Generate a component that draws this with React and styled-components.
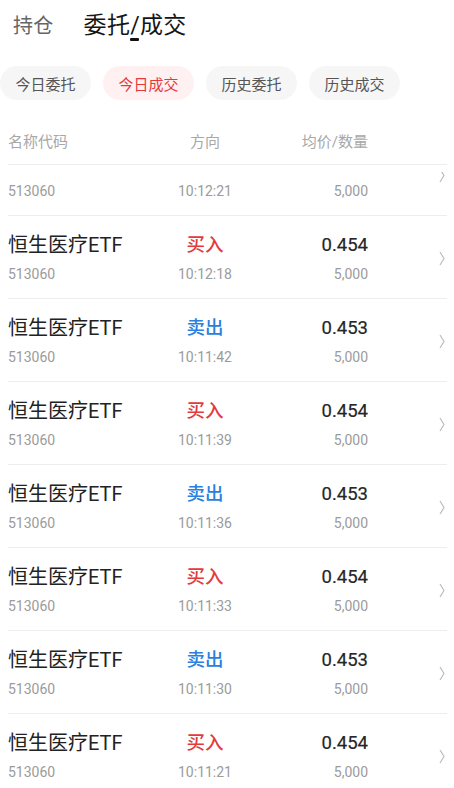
import React, { useLayoutEffect, useRef, useState } from "react";
import styled, { createGlobalStyle } from "styled-components";

const GlobalStyle = createGlobalStyle`
  html, body {
    margin: 0;
    padding: 0;
    background: #fff;
  }
  body {
    font-family: Roboto, "Noto Sans CJK SC", sans-serif;
    -webkit-font-smoothing: antialiased;
  }
  * { box-sizing: border-box; }
`;

const Page = styled.div`
  display: flex;
  flex-direction: column;
  height: 100vh;
  overflow: hidden;
  background: #fff;
`;

const TopBar = styled.div`
  display: flex;
  align-items: center;
  gap: 30px;
  height: 52px;
  padding: 0 13px;
`;

const TopTab = styled.div`
  font-size: ${(p) => (p.$active ? "23px" : "20px")};
  color: ${(p) => (p.$active ? "#151515" : "#666")};
  line-height: 30px;
  font-weight: 400;
  letter-spacing: 0.3px;
`;

const Slash = styled.span`
  position: relative;
  &::after {
    content: "";
    position: absolute;
    left: 0;
    bottom: -2px;
    width: 9px;
    height: 3px;
    border-radius: 1px;
    background: #111;
  }
`;

const Pills = styled.div`
  display: flex;
  gap: 12px;
  margin-top: 14px;
`;

const Pill = styled.div`
  height: 34px;
  width: 91px;
  border-radius: 17px;
  display: flex;
  align-items: center;
  justify-content: center;
  font-size: 15px;
  color: ${(p) => (p.$active ? "#e5393d" : "#555")};
  background: ${(p) => (p.$active ? "#fff1f1" : "#f6f6f6")};
`;

const Grid = styled.div`
  display: grid;
  grid-template-columns: 140px 114px 106px 1fr;
  align-items: center;
`;

const Head = styled(Grid)`
  margin: 18px 7px 0 8px;
  height: 47px;
  border-bottom: 1px solid #ededed;
  font-size: 15px;
  color: #a8a8a8;
  padding-bottom: 1px;
`;

const Cell = styled.div`
  justify-self: ${(p) => (p.$align === "right" ? "end" : p.$align === "center" ? "center" : "start")};
`;

const List = styled.div`
  flex: 1;
  margin-top: 7px;
  overflow-y: auto;
  padding: 0 7px 0 8px;
  scrollbar-width: none;
  &::-webkit-scrollbar { display: none; }
`;

const Row = styled(Grid)`
  height: 83px;
  border-bottom: 1px solid #ededed;
  padding: 17px 0 15px;
  grid-template-rows: 24px 20px;
  row-gap: 7px;
`;

const Name = styled.div`
  font-size: 20px;
  color: #222;
  line-height: 24px;
`;

const Side = styled.div`
  justify-self: center;
  font-size: 18.5px;
  line-height: 24px;
  font-weight: 500;
  color: ${(p) => (p.$buy ? "#e5393d" : "#2a7fe0")};
`;

const Price = styled.div`
  justify-self: end;
  font-size: 18.5px;
  line-height: 24px;
  color: #262626;
  font-weight: 400;
  -webkit-text-stroke: 0.2px #262626;
`;

const Sub = styled.div`
  font-size: 14px;
  line-height: 20px;
  color: #9b9b9b;
  justify-self: ${(p) => p.$place || "start"};
`;

const Arrow = styled.div`
  grid-row: 1 / span 2;
  grid-column: 4;
  justify-self: end;
  margin-right: 2px;
  display: flex;
  align-items: center;
`;

const Chevron = () => (
  <svg width="6" height="15" viewBox="0 0 6 15">
    <polyline points="1,1 5,7.5 1,14" fill="none" stroke="#b8b8b8" strokeWidth="1.1" />
  </svg>
);

const trades = [
  { buy: true, price: "0.454", time: "10:12:21" },
  { buy: true, price: "0.454", time: "10:12:18" },
  { buy: false, price: "0.453", time: "10:11:42" },
  { buy: true, price: "0.454", time: "10:11:39" },
  { buy: false, price: "0.453", time: "10:11:36" },
  { buy: true, price: "0.454", time: "10:11:33" },
  { buy: false, price: "0.453", time: "10:11:30" },
  { buy: true, price: "0.454", time: "10:11:21" },
  { buy: false, price: "0.453", time: "10:11:18" },
  { buy: true, price: "0.454", time: "10:11:12" },
];

const tabs = ["今日委托", "今日成交", "历史委托", "历史成交"];

export default function App() {
  const [tab] = useState(1);
  const listRef = useRef(null);

  useLayoutEffect(() => {
    // list is scrolled a little in the screenshot
    if (listRef.current) listRef.current.scrollTop = 39;
  }, []);

  return (
    <Page>
      <GlobalStyle />
      <TopBar>
        <TopTab>持仓</TopTab>
        <TopTab $active>
          委托<Slash>/</Slash>成交
        </TopTab>
      </TopBar>
      <Pills>
        {tabs.map((t, i) => (
          <Pill key={t} $active={i === tab}>
            {t}
          </Pill>
        ))}
      </Pills>
      <Head>
        <Cell>名称代码</Cell>
        <Cell $align="center">方向</Cell>
        <Cell $align="right">均价/数量</Cell>
      </Head>
      <List ref={listRef}>
        {trades.map((t, i) => (
          <Row key={i}>
            <Name>恒生医疗ETF</Name>
            <Side $buy={t.buy}>{t.buy ? "买入" : "卖出"}</Side>
            <Price>{t.price}</Price>
            <Arrow>
              <Chevron />
            </Arrow>
            <Sub>513060</Sub>
            <Sub $place="center">{t.time}</Sub>
            <Sub $place="end">5,000</Sub>
          </Row>
        ))}
      </List>
    </Page>
  );
}
